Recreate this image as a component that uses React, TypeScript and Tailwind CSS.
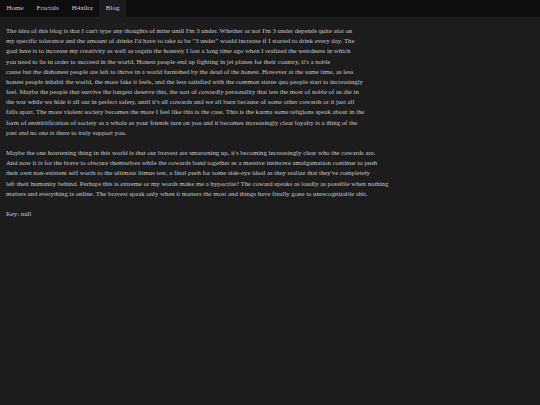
const para1 = [
  "The idea of this blog is that I can't type any thoughts of mine until I'm 3 under. Whether or not I'm 3 under depends quite alot on",
  'my specific tolerance and the amount of drinks I\'d have to take to be "3 under" would increase if I started to drink every day. The',
  'goal here is to increase my creativity as well as regain the honesty I lost a long time ago when I realized the weirdness in which',
  "you need to lie in order to succeed in the world. Honest people end up fighting in jet planes for their country, it's a noble",
  'cause but the dishonest people are left to thrive in a world furnished by the dead of the honest. However at the same time, as less',
  'honest people inhabit the world, the more fake it feels, and the less satisfied with the common status quo people start to increasingly',
  'feel. Maybe the people that survive the longest deserve this, the sort of cowardly personality that lets the most of noble of us die in',
  "the war while we hide it all out in perfect safety, until it's all cowards and we all burn because of some other cowards or it just all",
  'falls apart. The more violent society becomes the more I feel like this is the case. This is the karma some religions speak about in the',
  'form of enshittification of society as a whole as your friends turn on you and it becomes increasingly clear loyalty is a thing of the',
  'past and no one is there to truly support you.',
];

const para2 = [
  "Maybe the one heartening thing in this world is that our bravest are smartening up, it's becoming increasingly clear who the cowards are.",
  'And now it is for the brave to obscure themselves while the cowards band together as a massive insincere amalgamation continue to push',
  "their own non-existent self worth to the ultimate litmus test, a final push for some side-eye ideal as they realize that they've completely",
  'left their humanity behind. Perhaps this is extreme or my words make me a hypocrite? The coward speaks as loudly as possible when nothing',
  'matters and everything is online. The bravest speak only when it matters the most and things have finally gone to unrecognizable shit.',
];

const links = ['Home', 'Fractals', 'H4x0rz', 'Blog'];

export default function App() {
  return (
    <div className="min-h-screen w-full bg-[#1c1c1c] text-[#c9c9c9] font-['Liberation_Serif',serif] text-[6.75px]">
      <nav className="flex h-[17px] bg-[#0e0e0e] text-[7px]">
        {links.map((l) => (
          <a
            key={l}
            className={`flex items-center px-[6.5px] text-[#d0d0d0] ${l === 'Blog' ? 'bg-[#1c1c1c]' : ''}`}
          >
            {l}
          </a>
        ))}
      </nav>
      <div className="px-[6px] pt-[9px] leading-[10.17px]">
        <p>
          {para1.map((line, i) => (
            <span key={i}>
              {line}
              <br />
            </span>
          ))}
          <br />
          {para2.map((line, i) => (
            <span key={i}>
              {line}
              <br />
            </span>
          ))}
          <br />
          Key: null
        </p>
      </div>
    </div>
  );
}
